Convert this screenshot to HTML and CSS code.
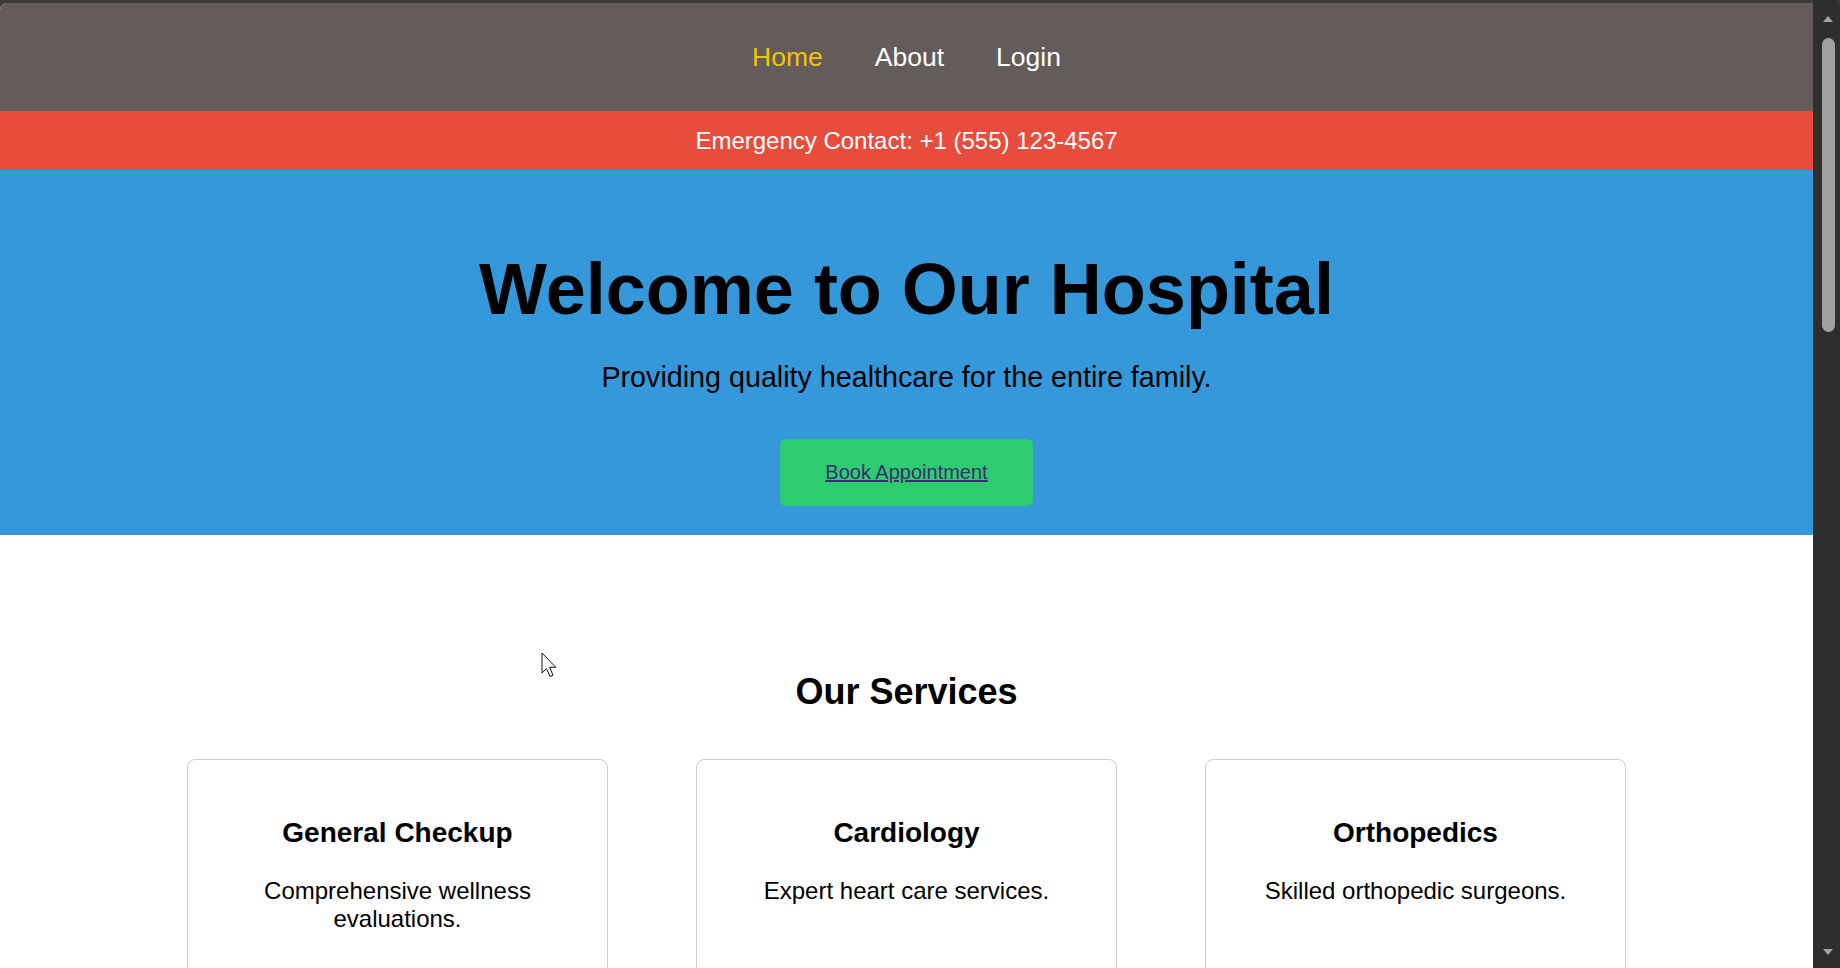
FILE: index.html
```html
<!DOCTYPE html>
<html lang="en">
<head>
<meta charset="utf-8">
<title>Hospital</title>
<link rel="stylesheet" href="styles.css">
</head>
<body>
<div class="window">
  <div class="page">
    <nav class="topnav">
      <a class="nav-link active" href="#">Home</a>
      <a class="nav-link" href="#">About</a>
      <a class="nav-link" href="#">Login</a>
    </nav>
    <div class="emergency">Emergency Contact: +1 (555) 123-4567</div>
    <section class="hero">
      <h1 class="hero-title">Welcome to Our Hospital</h1>
      <p class="hero-sub">Providing quality healthcare for the entire family.</p>
      <a class="btn-book" href="#">Book Appointment</a>
    </section>
    <section class="services">
      <h2 class="services-title">Our Services</h2>
      <div class="cards">
        <div class="card">
          <h3 class="card-title">General Checkup</h3>
          <p class="card-text">Comprehensive wellness evaluations.</p>
        </div>
        <div class="card">
          <h3 class="card-title">Cardiology</h3>
          <p class="card-text">Expert heart care services.</p>
        </div>
        <div class="card">
          <h3 class="card-title">Orthopedics</h3>
          <p class="card-text">Skilled orthopedic surgeons.</p>
        </div>
      </div>
    </section>
    <svg class="cursor" width="17" height="27" viewBox="0 0 17 27">
      <path d="M1 1 L1 21 L5.5 16.5 L9 24.5 L12 23.2 L8.6 15.3 L14.8 15.3 Z" fill="#fff" stroke="#111" stroke-width="1" stroke-linejoin="round"/>
    </svg>
  </div>
  <div class="scrollbar">
    <svg class="sb-arrow" width="12" height="8" viewBox="0 0 12 8"><path d="M6 1 L11 7 L1 7 Z" fill="#a3a3a3"/></svg>
    <div class="sb-track"><div class="sb-thumb"></div></div>
    <svg class="sb-arrow" width="12" height="8" viewBox="0 0 12 8"><path d="M1 1 L11 1 L6 7 Z" fill="#a3a3a3"/></svg>
  </div>
</div>
</body>
</html>
```

FILE: styles.css
```css
html, body {
  margin: 0;
  padding: 0;
  height: 100%;
  overflow: hidden;
}

body {
  background: #3a3b3b;
  font-family: "Liberation Sans", Arial, sans-serif;
  color: #000;
}

.window {
  display: flex;
  height: 968px;
}

.page {
  position: relative;
  flex: 1;
  margin-top: 3px;
  background: #fff;
  border-top-left-radius: 7px;
  overflow: hidden;
}

.topnav {
  height: 108px;
  background: #645c5a;
  display: flex;
  justify-content: center;
  align-items: center;
  gap: 52px;
}

.nav-link {
  color: #fff;
  text-decoration: none;
  font-size: 26.5px;
  line-height: 1;
}

.nav-link.active {
  color: #f1c40f;
}

.emergency {
  height: 59px;
  background: #e74c3c;
  color: #fff;
  font-size: 24px;
  display: flex;
  align-items: center;
  justify-content: center;
}

.hero {
  background: #3498db;
  text-align: center;
  padding: 78px 0 29px;
}

.hero-title {
  margin: 0 0 30.5px;
  font-size: 72px;
  font-weight: bold;
  line-height: normal;
}

.hero-sub {
  margin: 0 0 45px;
  font-size: 28.7px;
  line-height: normal;
}

.btn-book {
  display: inline-block;
  background: #2ecc71;
  color: #372f6c;
  font-size: 20px;
  line-height: 23px;
  padding: 22px 45.5px;
  border-radius: 6px;
  text-decoration: underline;
}

.services {
  padding-top: 136px;
  text-align: center;
}

.services-title {
  margin: 0 0 46px;
  font-size: 36px;
  font-weight: bold;
  line-height: normal;
}

.cards {
  display: grid;
  grid-template-columns: repeat(3, 421px);
  gap: 88px;
  justify-content: center;
}

.card {
  box-sizing: border-box;
  border: 1px solid #cdcdcd;
  border-radius: 8px;
  padding: 0 25px;
  min-height: 320px;
}

.card-title {
  margin: 57px 0 28px;
  font-size: 28px;
  font-weight: bold;
  line-height: normal;
}

.card-text {
  margin: 0;
  font-size: 24px;
  line-height: normal;
}

.cursor {
  position: absolute;
  left: 541px;
  top: 649px;
}

.scrollbar {
  width: 27px;
  background: #2e2e2e;
  border-top-right-radius: 8px;
  display: flex;
  flex-direction: column;
  align-items: center;
  padding: 15px 0 12px;
  box-sizing: border-box;
}

.sb-arrow {
  display: block;
  margin-left: 2px;
}

.sb-track {
  flex: 1;
  width: 100%;
  display: flex;
  justify-content: center;
  padding-top: 15px;
  padding-left: 3px;
  box-sizing: border-box;
}

.sb-thumb {
  width: 13px;
  height: 294px;
  border-radius: 7px;
  background: #a0a0a0;
}
```
